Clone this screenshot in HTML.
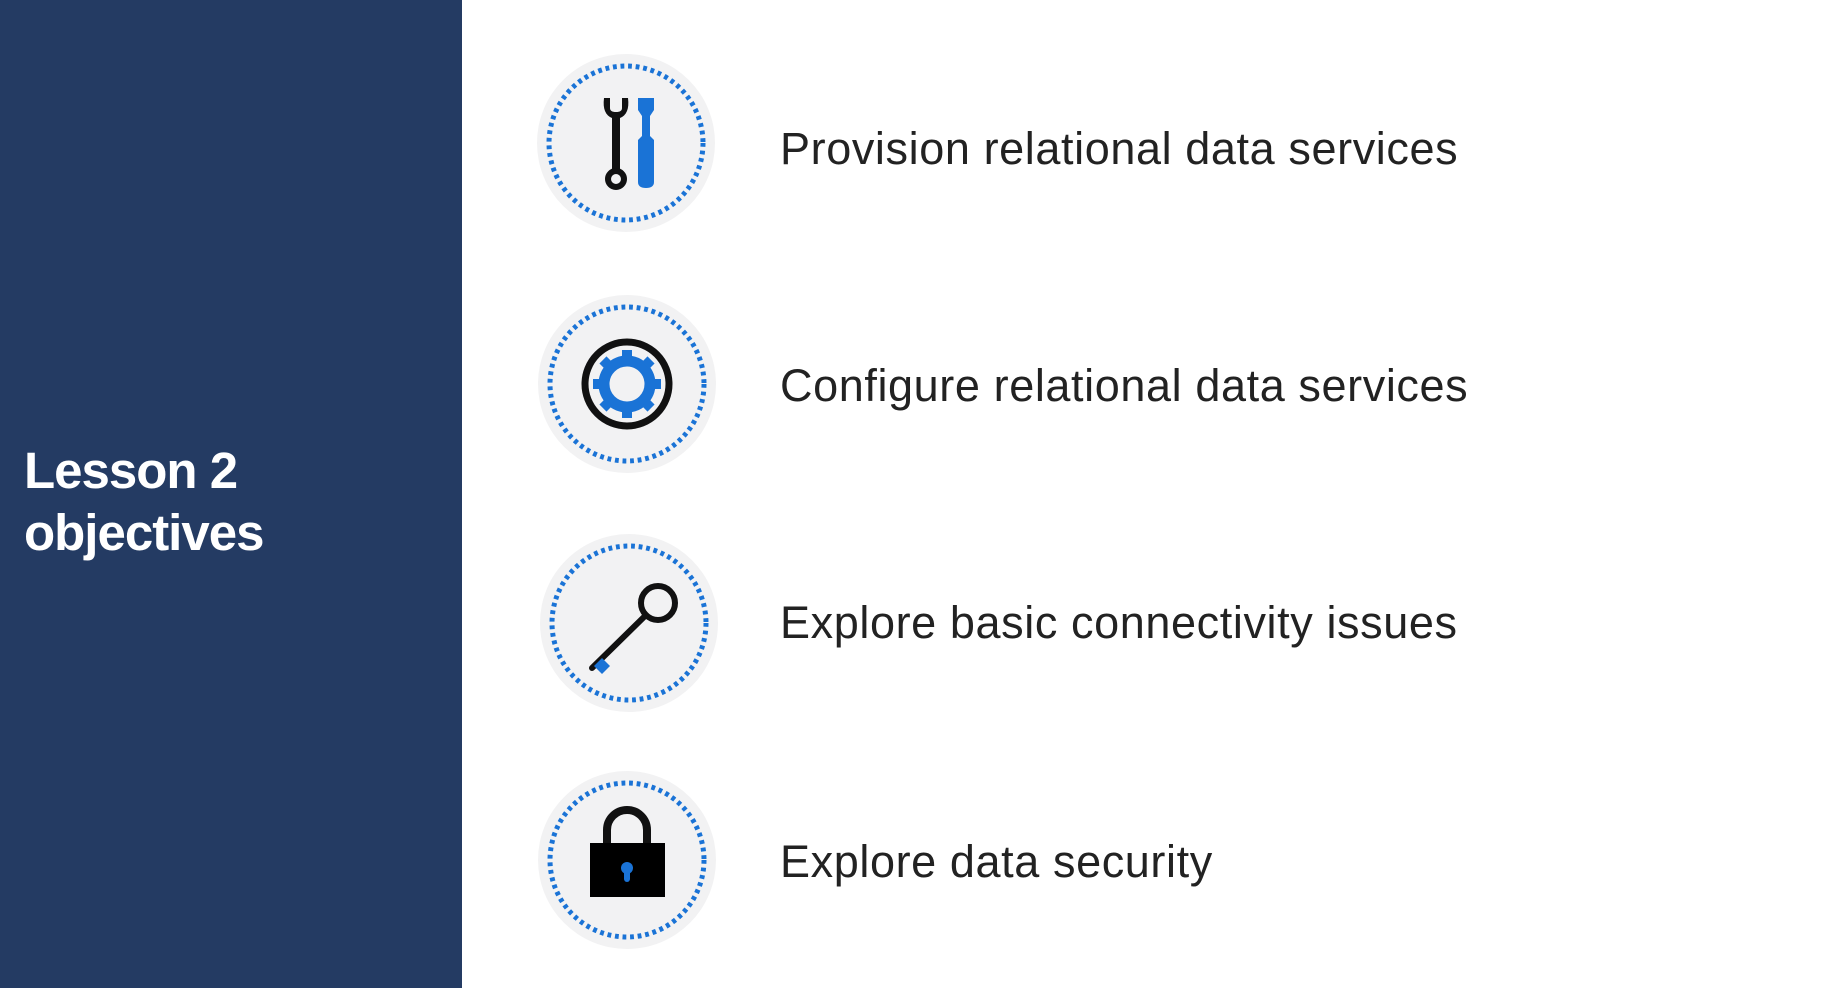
<!DOCTYPE html>
<html><head><meta charset="utf-8"><style>
html,body{margin:0;padding:0}
body{width:1846px;height:988px;position:relative;overflow:hidden;background:#fff;font-family:"Liberation Sans",sans-serif}
.left{position:absolute;left:0;top:0;width:462px;height:988px;background:#243b63}
.title{position:absolute;left:24px;top:440px;color:#fff;font-size:51px;line-height:62px;font-weight:bold;letter-spacing:-1px}
.item{position:absolute;left:780px;font-size:45px;color:#222;line-height:1;letter-spacing:0.6px}
</style></head><body>
<div class="left"></div>
<div class="title">Lesson 2<br>objectives</div>
<div class="item" style="top:126px">Provision relational data services</div>
<div class="item" style="top:363px">Configure relational data services</div>
<div class="item" style="top:600px">Explore basic connectivity issues</div>
<div class="item" style="top:839px">Explore data security</div>
<svg width="1846" height="988" style="position:absolute;left:0;top:0">
<defs>
<g id="c">
<circle r="89" fill="#f2f2f3"/>
<circle r="77" fill="none" stroke="#1a73d6" stroke-width="5" stroke-dasharray="3.8 3.8"/>
</g>
</defs>
<g transform="translate(626,143)">
<use href="#c"/>
<path d="M-22,-45 q-2,16 8,20 v0 h8 q10,-4 8,-20 h-6 v10 q0,4 -6,4 q-6,0 -6,-4 v-10z" fill="#111"/>
<rect x="-14" y="-28" width="8" height="58" fill="#111"/>
<circle cx="-10" cy="36" r="8" fill="none" stroke="#111" stroke-width="6"/>
<path d="M12,-45 h16 v12 l-4,6 v20 l4,4 v42 q0,6 -8,6 q-8,0 -8,-6 v-42 l4,-4 v-20 l-4,-6z" fill="#1a73d6"/>
</g>
<g transform="translate(627,384)">
<use href="#c"/>
<circle r="42" fill="none" stroke="#111" stroke-width="7"/>
<circle r="23" fill="none" stroke="#1a73d6" stroke-width="11"/>
<g fill="#1a73d6">
<rect x="-5" y="-34" width="10" height="8"/><rect x="-5" y="26" width="10" height="8"/>
<rect x="-34" y="-5" width="8" height="10"/><rect x="26" y="-5" width="8" height="10"/>
<g transform="rotate(45)"><rect x="-5" y="-34" width="10" height="8"/><rect x="-5" y="26" width="10" height="8"/><rect x="-34" y="-5" width="8" height="10"/><rect x="26" y="-5" width="8" height="10"/></g>
</g>
</g>
<g transform="translate(629,623)">
<use href="#c"/>
<circle cx="29" cy="-20" r="17" fill="none" stroke="#111" stroke-width="6"/>
<path d="M17,-8 L-37,45" stroke="#111" stroke-width="6" stroke-linecap="round"/>
<path d="M-27,35 l8,8 -8,8 -8,-8z" fill="#1a73d6"/>
</g>
<g transform="translate(627,860)">
<use href="#c"/>
<path d="M-20,-16 v-14 a20,20 0 0 1 40,0 v14" stroke="#111" stroke-width="8" fill="none"/>
<rect x="-37" y="-17" width="75" height="54" fill="#000"/>
<circle cx="0" cy="8" r="6" fill="#1a73d6"/>
<rect x="-3" y="8" width="6" height="14" rx="3" fill="#1a73d6"/>
</g>
</svg>
</body></html>
